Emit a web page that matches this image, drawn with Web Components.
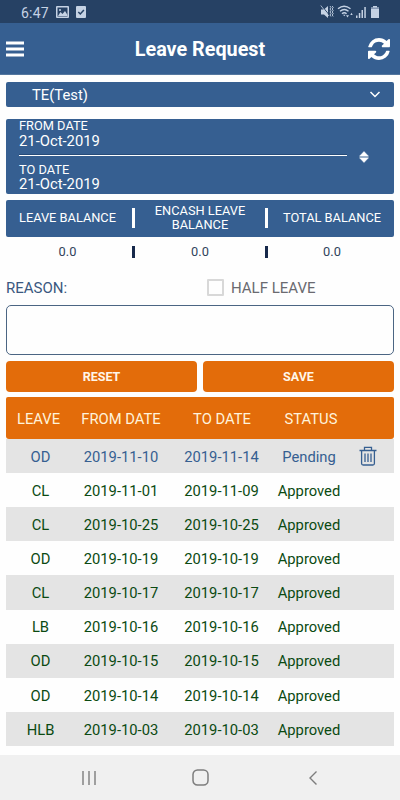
<!DOCTYPE html>
<html lang="en"><head><meta charset="utf-8"><title>Leave Request</title>
<style>
html,body{margin:0;height:100%;background:#fefefe;overflow:hidden}
body{font-family:Roboto,"Liberation Sans",sans-serif}
</style></head><body>
<leave-app></leave-app>
<script>
const define=(name,html,init)=>customElements.define(name,class extends HTMLElement{
  constructor(){super();const t=document.createElement('template');t.innerHTML=html;
    this.attachShadow({mode:'open'}).append(t.content.cloneNode(true));}
  connectedCallback(){if(init)init(this,this.shadowRoot);}
});

define('status-bar',`<style>
:host{display:flex;box-sizing:border-box;height:23px;background:#264164;color:#c5d2e4;padding:0 20px 0 21px;align-items:center;justify-content:space-between}
div{display:flex;align-items:center;padding-top:1px}
span{font-size:14px;line-height:20px;width:28px;white-space:nowrap;letter-spacing:.2px;padding-top:1px}
svg{display:block}
</style>
<div><span>6:47</span>
<svg style="margin-left:7px" width="13" height="12" viewBox="0 0 13 12"><rect width="13" height="12" rx="1" fill="#c5d2e4"/><path d="M1.500 1.500h10v9h-10z" fill="#264164"/><path d="M2 10l2.500-4 2 2 2.500-3 2.500 4v1z" fill="#c5d2e4"/><circle cx="4" cy="4" r="1" fill="#c5d2e4"/></svg>
<svg style="margin-left:7px" width="10" height="12" viewBox="0 0 10 12"><rect width="10" height="12" rx="1" fill="#c5d2e4"/><path d="M2.300 6l2 2 3.600-4" fill="none" stroke="#264164" stroke-width="1.500"/></svg></div>
<div><svg width="60" height="14" viewBox="320 5 60 14" fill="#c5d2e4">
<path d="M321 9.500h3l4-3.500v12l-4-3.500h-3z"/><path d="M321.600 5.500l8 10" stroke="#264164" stroke-width="1"/><path d="M320.800 5.500l8 10.500" stroke="#c5d2e4" stroke-width=".8"/>
<path d="M330 6l1 1.500-1 1.500 1 1.500-1 1.500 1 1.500-1 1.500 1 1.500M332.200 6l1 1.500-1 1.500 1 1.500-1 1.500 1 1.500-1 1.500 1 1.500" fill="none" stroke="#c5d2e4" stroke-width=".9"/>
<path d="M338 8.800q6-5 12.500 0M340 11.300q4.300-3.600 8.500 0M342 13.700q2.300-2 4.600 0" fill="none" stroke="#c5d2e4" stroke-width="1.400"/><path d="M343 14.800h2.600l-1.300 1.500zM346 15.200h3l-1.500 2.300zM350.300 15l1.200-2.200 1.200 2.200z"/>
<path d="M356 15.500h1.500V18H356zM358.800 13h1.500v5h-1.500zM361.500 10h1.500v8h-1.500zM364.300 7h1.500v11h-1.500z"/>
<path d="M373 6h4v1.500h2V18h-8V7.500h2z"/><path d="M371 7.500h8V9h-8z" fill="#8698b3"/></svg></div>`);

define('app-header',`<style>
:host{display:grid;grid-template-columns:40px 1fr 40px;align-items:center;height:52px;box-sizing:border-box;background:#365f91;color:#fff;border-bottom:1px solid #54779f}
h1{margin:0;text-align:center;font-size:19.800px;line-height:24px;font-weight:700;padding-top:3px}
svg{display:block}
</style>
<svg width="40" height="30" viewBox="0 34 40 30" fill="#fff"><path d="M6 41.600h18v3H6zM6 47.600h18v3H6zM6 53.400h18v3H6z"/></svg>
<h1><slot></slot></h1>
<svg width="40" height="30" viewBox="360 34 40 30"><g transform="translate(368,38) scale(.01432)"><path fill="#fff" d="M1511 928q0 5-1 7-64 268-268 434.500T764 1536q-146 0-282.500-55T238 1324l-129 129q-19 19-45 19t-45-19-19-45V960q0-26 19-45t45-19h448q26 0 45 19t19 45-19 45l-137 137q71 66 161 102t187 36q134 0 250-65t186-179q11-17 53-117 8-23 30-23h192q13 0 22.500 9.500t9.500 22.500zm25-800v448q0 26-19 45t-45 19h-448q-26 0-45-19t-19-45 19-45l138-138Q969 256 768 256q-134 0-250 65T332 500q-11 17-53 117-8 23-30 23H50q-13 0-22.500-9.500T18 608v-7q65-268 270-434.500T768 0q146 0 284 55.500T1297 212l130-129q19-19 45-19t45 19 19 45z"/></g></svg>`);

define('unit-select',`<style>
:host{display:flex;align-items:center;justify-content:space-between;height:25px;border-radius:2px;background:#365f91;color:#fff;padding:0 13px 0 26px;font-size:14.800px}
</style><slot></slot><svg width="12" height="8" viewBox="0 0 12 8"><path d="M1.500 1L6 5.500 10.500 1" fill="none" stroke="#fff" stroke-width="1.500"/></svg>`);

define('date-range',`<style>
:host{display:grid;grid-template-columns:328px 1fr;height:75px;border-radius:2px;background:#365f91;color:#fff;padding-left:13px}
.c{display:flex;flex-direction:column}
hr{width:100%;height:1px;border:0;background:#fff;margin:0;box-shadow:0 -1px #264b78}
svg{align-self:center;margin:2px 0 0 12px}
</style><div class="c"><slot name="from"></slot><hr><slot name="to"></slot></div>
<svg width="10" height="12" viewBox="0 0 10 12" fill="#fff"><path d="M.5 5.200L5 .5l4.500 4.700zM.5 6.800h9L5 11.500z" stroke="#fff" stroke-width=".5"/></svg>`);

define('date-field',`<style>
:host{display:block;white-space:nowrap}
small{display:block;font-size:12.800px;line-height:15px;padding-bottom:.5px}
b{display:block;font-weight:400;font-size:14.800px;line-height:15px}
</style><small></small><b><slot></slot></b>`,(h,r)=>r.querySelector('small').textContent=h.getAttribute('label'));

define('balance-table',`<style>
:host{display:block;text-align:center;font-size:12.800px}
.r{display:grid;grid-template-columns:126px 133px 129px;align-items:center}
.h{background:#365f91;color:#fff;border-radius:2px;height:37px;line-height:14.500px}
.v{height:30px;margin-bottom:-1px;color:#31435c}
span{display:flex;align-items:center;justify-content:center}
.h span{height:20px}
.v span{height:12px}
span:first-child{padding-right:3px}
span:last-child{padding-left:2px}
span+span{border-left:3px solid #fff}
.v span+span{border-color:#17294b}
</style><div class="r h"><span>LEAVE BALANCE</span><span>ENCASH LEAVE<br>BALANCE</span><span>TOTAL BALANCE</span></div>
<div class="r v"><span>0.0</span><span>0.0</span><span>0.0</span></div>`);

define('reason-form',`<style>
:host{display:block}
.t{display:flex;align-items:center;height:36px;font-size:15px;color:#3a5880;white-space:nowrap}
.t span{padding-top:2px}
.t span:first-child{width:201px}
i{box-sizing:border-box;width:17px;height:17px;border:2px solid #d8d8d8;border-radius:1px;margin:1px 7px 0 0}
.t span:last-child{color:#6a6a70}
textarea{display:block;box-sizing:border-box;width:100%;height:50px;border:1px solid #4b6583;border-radius:5px;background:#fefefe;resize:none;margin:0}
</style><div class="t"><span>REASON:</span><i></i><span>HALF LEAVE</span></div><textarea></textarea>`);

define('action-button',`<style>
:host{display:flex;flex:1;height:31px;align-items:center;justify-content:center;border-radius:4px;background:#e36c0a;color:#fff6e8;font-weight:700;font-size:12.500px}
</style><slot></slot>`);

define('leave-row',`<style>
:host{display:grid;grid-template-columns:65px 100px 101px 76px 43px;height:34.100px;align-items:center;text-align:center;font-size:14.750px;color:#0b4a12;white-space:nowrap}
span{padding-top:1.500px}
:host(:not([head])) span:first-of-type{padding-left:4px}
:host(:not([head])) span:nth-of-type(4){padding-right:2px}
:host([alt]){background:#e4e4e4}
:host([pending]){color:#365f91}
:host([head]){height:42px;border-radius:2px 2px 3px 3px;background:#e36c0a;color:#fff3dc;grid-template-columns:65px 100px 102px 76px 43px}
svg{display:none}
:host([pending]) svg{display:block;margin:0 0 0 11px}
</style><span></span><span></span><span></span><span></span>
<svg width="18" height="20" viewBox="0 0 18 20" fill="none" stroke="#365f91" stroke-width="1.300"><path d="M.5 4.500h17M5.500 4V1.300h7V4M2.600 4.500v13q0 1.500 1.500 1.500h9.800q1.500 0 1.500-1.500v-13M6 7.500v8.500M9 7.500v8.500M12 7.500v8.500"/></svg>`,
(h,r)=>h.getAttribute('cells').split('|').forEach((c,i)=>r.querySelectorAll('span')[i].textContent=c));

define('nav-bar',`<style>
:host{display:grid;grid-template-columns:1fr 1fr 1fr;align-items:center;height:45px;background:#f0f0f0;box-sizing:border-box;padding:0 32px 0 33px;justify-items:center}
svg{display:block}
</style>
<svg width="16" height="16" viewBox="0 0 16 16"><path d="M2 1v14M8 1v14M14 1v14" stroke="#7d7d7d" stroke-width="1.400"/></svg>
<svg width="17" height="17" viewBox="0 0 17 17"><rect x="1" y="1" width="15" height="15" rx="4.500" fill="none" stroke="#7d7d7d" stroke-width="1.500"/></svg>
<svg style="margin-left:2px" width="10" height="16" viewBox="0 0 10 16"><path d="M8.500 1.500L2 8l6.500 6.500" fill="none" stroke="#7d7d7d" stroke-width="1.400"/></svg>`);

define('leave-app',`<style>
:host{display:flex;flex-direction:column;width:400px;height:800px;background:#fefefe}
main{flex:1;padding:7px 6px 0}
date-range{margin-top:11.500px}
balance-table{margin-top:6px}
reason-form{margin-top:3px}
.b{display:flex;gap:6px;margin:6px 0 5.600px}
</style><status-bar></status-bar><app-header>Leave Request</app-header>
<main><unit-select>TE(Test)</unit-select>
<date-range><date-field slot="from" label="FROM DATE" style="height:37px;margin-top:-.5px">21-Oct-2019</date-field><date-field slot="to" label="TO DATE" style="padding-top:5.500px">21-Oct-2019</date-field></date-range>
<balance-table></balance-table><reason-form></reason-form>
<div class="b"><action-button>RESET</action-button><action-button>SAVE</action-button></div>
<leave-row head cells="LEAVE|FROM DATE|TO DATE|STATUS"></leave-row>
<leave-row alt pending cells="OD|2019-11-10|2019-11-14|Pending"></leave-row>
<leave-row cells="CL|2019-11-01|2019-11-09|Approved"></leave-row>
<leave-row alt cells="CL|2019-10-25|2019-10-25|Approved"></leave-row>
<leave-row cells="OD|2019-10-19|2019-10-19|Approved"></leave-row>
<leave-row alt cells="CL|2019-10-17|2019-10-17|Approved"></leave-row>
<leave-row cells="LB|2019-10-16|2019-10-16|Approved"></leave-row>
<leave-row alt cells="OD|2019-10-15|2019-10-15|Approved"></leave-row>
<leave-row cells="OD|2019-10-14|2019-10-14|Approved"></leave-row>
<leave-row alt cells="HLB|2019-10-03|2019-10-03|Approved"></leave-row>
</main><nav-bar></nav-bar>`);
</script></body></html>
